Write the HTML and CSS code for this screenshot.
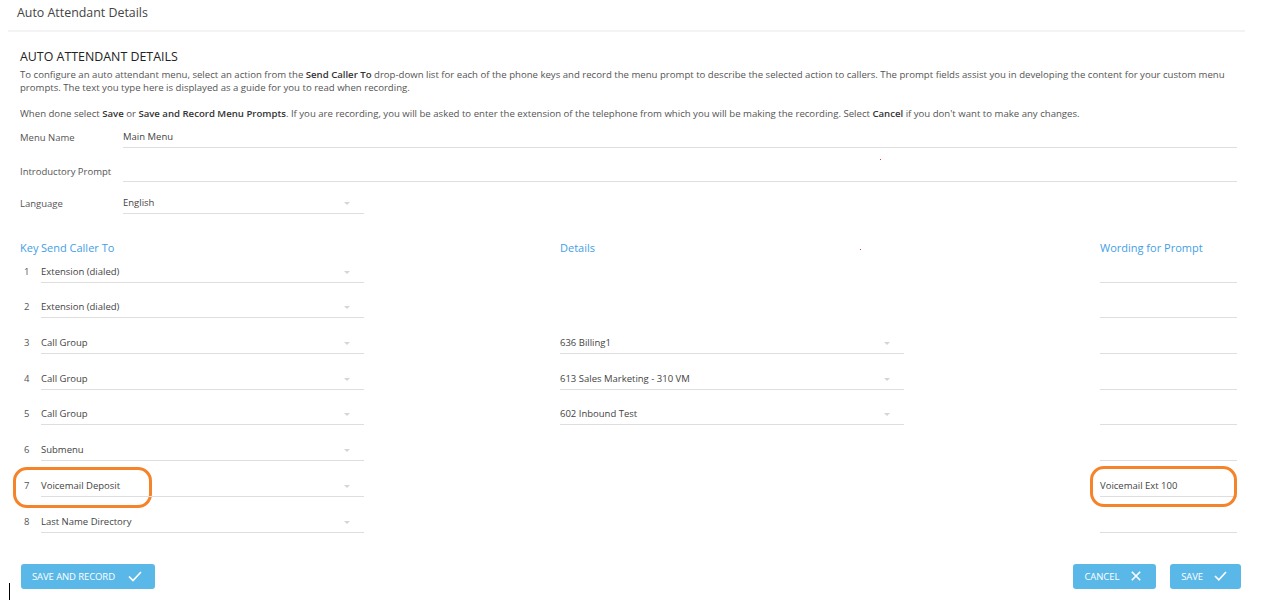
FILE: index.html
```html
<!DOCTYPE html>
<html>
<head>
<meta charset="utf-8">
<link rel="stylesheet" href="styles.css">
</head>
<body>
<div class="topbar">Auto Attendant Details</div>
<div class="content">
  <h2 class="title">AUTO ATTENDANT DETAILS</h2>
  <p class="desc">To configure an auto attendant menu, select an action from the <b>Send Caller To</b> drop-down list for each of the phone keys and record the menu prompt to describe the selected action to callers. The prompt fields assist you in developing the content for your custom menu prompts. The text you type here is displayed as a guide for you to read when recording.</p>
  <p class="desc last">When done select <b>Save</b> or <b>Save and Record Menu Prompts</b>. If you are recording, you will be asked to enter the extension of the telephone from which you will be making the recording. Select <b>Cancel</b> if you don't want to make any changes.</p>

  <div class="frow r1"><span class="flabel">Menu Name</span><div class="field full">Main Menu</div></div>
  <div class="frow r2"><span class="flabel">Introductory Prompt</span><div class="field full"></div><span class="dot dot1"></span></div>
  <div class="frow r3"><span class="flabel">Language</span><div class="field select lang">English<span class="arrow"></span></div></div>

  <div class="grid">
    <div class="hd">Key</div><div class="hd">Send Caller To</div><div class="hd">Details<span class="dot dot2"></span></div><div class="hd">Wording for Prompt</div>

    <div class="key">1</div><div class="field select">Extension (dialed)<span class="arrow"></span></div><div></div><div class="field"></div>
    <div class="key">2</div><div class="field select">Extension (dialed)<span class="arrow"></span></div><div></div><div class="field"></div>
    <div class="key">3</div><div class="field select">Call Group<span class="arrow"></span></div><div class="field select">636 Billing1<span class="arrow"></span></div><div class="field"></div>
    <div class="key">4</div><div class="field select">Call Group<span class="arrow"></span></div><div class="field select">613 Sales Marketing - 310 VM<span class="arrow"></span></div><div class="field"></div>
    <div class="key">5</div><div class="field select">Call Group<span class="arrow"></span></div><div class="field select">602 Inbound Test<span class="arrow"></span></div><div class="field"></div>
    <div class="key">6</div><div class="field select">Submenu<span class="arrow"></span></div><div></div><div class="field"></div>
    <div class="key">7<span class="mark mark-left"></span></div><div class="field select">Voicemail Deposit<span class="arrow"></span></div><div></div><div class="field">Voicemail Ext 100<span class="mark mark-right"></span></div>
    <div class="key">8</div><div class="field select">Last Name Directory<span class="arrow"></span></div><div></div><div class="field"></div>
  </div>

  <div class="actions">
    <button class="btn">SAVE AND RECORD
      <svg width="14" height="11" viewBox="0 0 14 11"><path d="M1 5.5 L5 9.5 L13 1" fill="none" stroke="#fff" stroke-width="1.6"/></svg>
    </button>
    <div class="spacer"></div>
    <button class="btn cancel">CANCEL
      <svg width="10" height="10" viewBox="0 0 10 10"><path d="M0.8 0.8 L9.2 9.2 M9.2 0.8 L0.8 9.2" fill="none" stroke="#fff" stroke-width="1.6"/></svg>
    </button>
    <button class="btn">SAVE
      <svg width="13" height="10" viewBox="0 0 13 10"><path d="M1 5 L4.8 8.8 L12 1" fill="none" stroke="#fff" stroke-width="1.6"/></svg>
    </button>
  </div>
</div>
<span class="caret"></span>
</body>
</html>
```
FILE: styles.css
```css
html, body {
  margin: 0;
  padding: 0;
  background: #fff;
}
body {
  font-family: "Open Sans", "Liberation Sans", sans-serif;
  color: #555;
  width: 1263px;
  height: 607px;
  overflow: hidden;
  position: relative;
}
.topbar {
  margin-left: 8px;
  width: 1228px;
  padding-left: 9px;
  height: 30px;
  line-height: 26px;
  font-size: 12.4px;
  color: #444;
  border-bottom: 2px solid #f3f3f3;
}
.content {
  padding: 0 26px 0 20px;
}
.title {
  margin: 16px 0 2px;
  font-size: 12.4px;
  font-weight: 400;
  line-height: 18px;
  color: #222;
}
.desc {
  margin: 0 0 13px;
  font-size: 9.6px;
  line-height: 13px;
  color: #555;
}
.desc.last { margin-bottom: 0; }
.desc b {
  font-weight: 600;
  color: #333;
}
.frow {
  display: flex;
  align-items: flex-end;
  position: relative;
}
.frow.r1 { margin-top: 7px; }
.frow.r2 { margin-top: 13px; }
.frow.r3 { margin-top: 11px; }
.flabel {
  width: 103px;
  font-size: 9.5px;
  line-height: 20px;
  color: #555;
}
.field {
  position: relative;
  height: 20px;
  line-height: 20px;
  font-size: 9.5px;
  color: #444;
  border-bottom: 1px solid #dedede;
}
.field.full { flex: 1; }
.field.lang { width: 241px; }
.arrow {
  position: absolute;
  right: 14px;
  top: 9px;
  width: 0;
  height: 0;
  border-left: 3.5px solid transparent;
  border-right: 3.5px solid transparent;
  border-top: 3.5px solid #d5d5d5;
}
.grid {
  display: grid;
  grid-template-columns: 21px 519px 540px 137px;
  margin-top: 26px;
  row-gap: 12.7px;
}
.grid > div:nth-child(4n+2),
.grid > div:nth-child(4n+3) { margin-right: 196px; }
.grid .field {
  height: 21px;
  line-height: 21px;
  padding-top: 1px;
}
.grid .arrow { top: 11px; }
.hd {
  font-size: 11px;
  line-height: 16px;
  color: #3fa0e6;
  position: relative;
  margin-bottom: -9px;
}
.key {
  font-size: 9.5px;
  line-height: 22px;
  padding-top: 1px;
  color: #555;
  padding-left: 4px;
  position: relative;
}
.mark {
  position: absolute;
  border: 3px solid #f5832a;
  border-radius: 14px;
  pointer-events: none;
}
.mark-left {
  left: -7px;
  top: -7px;
  width: 133px;
  height: 35px;
}
.mark-right {
  left: -10px;
  top: -8px;
  width: 141px;
  height: 35px;
}
.dot {
  position: absolute;
  width: 1px;
  height: 1px;
  background: #e33;
}
.dot1 { left: 860px; top: -2px; }
.dot2 { left: 300px; top: 9px; }
.actions {
  display: flex;
  align-items: center;
  margin-top: 31px;
  margin-right: -4px;
}
.spacer { flex: 1; }
.btn {
  display: flex;
  align-items: center;
  gap: 11px;
  height: 25px;
  padding: 0 14px 0 11px;
  margin-left: 14px;
  border: none;
  border-radius: 3px;
  background: #5ab8e8;
  color: #fff;
  font-family: "Open Sans", "Liberation Sans", sans-serif;
  font-size: 9.5px;
  letter-spacing: -0.1px;
}
.btn:first-child { margin-left: 1px; gap: 13px; padding-right: 13px; }
.btn.cancel { gap: 12px; padding-right: 15px; }
.caret {
  position: absolute;
  left: 9px;
  top: 583px;
  width: 1px;
  height: 17px;
  background: #000;
}
```
